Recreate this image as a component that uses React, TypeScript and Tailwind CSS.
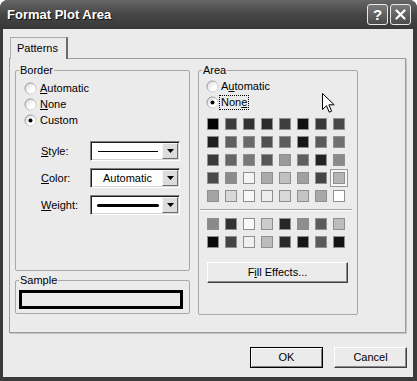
const font = "font-['Liberation_Sans',Arial,sans-serif]";

const paletteTop = [
  ["#050505", "#3c3c3c", "#323232", "#2a2a2a", "#3e3e3e", "#101010", "#383838", "#484848"],
  ["#1e1e1e", "#606060", "#6a6a6a", "#505050", "#5c5c5c", "#161616", "#5a5a5a", "#707070"],
  ["#3a3a3a", "#666666", "#787878", "#565656", "#9a9a9a", "#606060", "#222222", "#8a8a8a"],
  ["#4a4a4a", "#8a8a8a", "#f4f4f4", "#aaaaaa", "#c0c0c0", "#a0a0a0", "#444444", "#b4b4b4"],
  ["#a4a4a4", "#d8d8d8", "#f8f8f8", "#eeeeee", "#d8d8d8", "#c4c4c4", "#a8a8a8", "#ffffff"],
];

const paletteBottom = [
  ["#8a8a8a", "#333333", "#fafafa", "#cccccc", "#262626", "#8e8e8e", "#5a5a5a", "#bcbcbc"],
  ["#0a0a0a", "#444444", "#f0f0f0", "#bcbcbc", "#2a2a2a", "#161616", "#5a5a5a", "#141414"],
];

function Radio({ checked }: { checked?: boolean }) {
  return (
    <svg width="13" height="13" viewBox="0 0 13 13" className="shrink-0">
      <defs>
        <linearGradient id="radioFill" x1="0" y1="0" x2="1" y2="1">
          <stop offset="0" stopColor="#d2d2d2" />
          <stop offset="0.6" stopColor="#ffffff" />
        </linearGradient>
        <linearGradient id="radioEdge" x1="0" y1="0" x2="1" y2="1">
          <stop offset="0" stopColor="#7e7e7e" />
          <stop offset="1" stopColor="#e4e4e4" />
        </linearGradient>
      </defs>
      <circle cx="6.5" cy="6.5" r="5.5" fill="url(#radioFill)" stroke="url(#radioEdge)" />
      {checked && <circle cx="6.5" cy="6.5" r="2" fill="#000" />}
    </svg>
  );
}

function Dropdown({ children }: { children: React.ReactNode }) {
  return (
    <div className="w-[90px] h-[20px] flex bg-white border border-t-[#808080] border-l-[#808080] border-r-white border-b-white shadow-[inset_1px_1px_0_#202020,inset_-1px_-1px_0_#d4d4d4]">
      <div className="flex-1 flex items-center justify-center pl-[2px]">{children}</div>
      <div className="w-[16px] my-[1px] mr-[1px] flex items-center justify-center bg-[#dcdcdc] border border-t-[#f4f4f4] border-l-[#f4f4f4] border-r-[#6e6e6e] border-b-[#6e6e6e]">
        <svg width="7" height="4" viewBox="0 0 7 4">
          <path d="M0 0H7L3.5 4Z" fill="#000" />
        </svg>
      </div>
    </div>
  );
}

function Swatches({ rows, selected }: { rows: string[][]; selected?: [number, number] }) {
  return (
    <div className="grid grid-cols-[repeat(8,12px)] gap-[6px]">
      {rows.map((row, r) =>
        row.map((c, i) => {
          const sel = selected && selected[0] === r && selected[1] === i;
          return (
            <div
              key={`${r}-${i}`}
              className={
                "w-[12px] h-[12px] border border-[#8f8f8f] " +
                (sel ? "shadow-[0_0_0_2px_#f6f6f6,0_0_0_3px_#9a9a9a]" : "")
              }
              style={{ backgroundColor: c }}
            />
          );
        })
      )}
    </div>
  );
}

export default function App() {
  return (
    <div className={`relative w-[417px] h-[381px] bg-white text-[11px] leading-[13px] text-black ${font}`}>
      <div className="h-full flex flex-col rounded-t-[8px] overflow-hidden bg-[#3b3b3b]">
        {/* title bar */}
        <div className="h-[29px] shrink-0 flex items-center pl-[7px] pr-[6px] bg-gradient-to-b from-[#666] via-[#464646] to-[#383838]">
          <span className="font-bold text-[13px] text-white [text-shadow:1px_1px_0_#111]">Format Plot Area</span>
          <div className="ml-auto flex gap-[2px]">
            <div className="w-[21px] h-[21px] rounded-[3px] border border-[#e8e8e8] bg-gradient-to-b from-[#7a7a7a] to-[#4c4c4c] flex items-center justify-center">
              <span className="font-bold text-[15px] leading-none text-white">?</span>
            </div>
            <div className="w-[21px] h-[21px] rounded-[3px] border border-[#e8e8e8] bg-gradient-to-b from-[#7a7a7a] to-[#4c4c4c] flex items-center justify-center">
              <svg width="11" height="11" viewBox="0 0 11 11">
                <path d="M1.5 1.5L9.5 9.5M9.5 1.5L1.5 9.5" stroke="#fff" strokeWidth="2.2" strokeLinecap="round" />
              </svg>
            </div>
          </div>
        </div>

        {/* dialog body */}
        <div className="flex-1 ml-[3px] mr-[4px] mb-[4px] bg-[#ebebeb] flex flex-col pt-[8px] pl-[6px] pr-[6px]">
          {/* tab */}
          <div className="relative z-10 ml-[1px] -mb-[1px] w-[58px] h-[22px] bg-[#ebebeb] border-t border-l border-t-[#a8a8a8] border-l-[#b0b0b0] border-r-2 border-r-[#6a6a6a] flex items-center pl-[6px] pb-[1px]">
            Patterns
          </div>

          {/* tab panel */}
          <div className="w-[397px] h-[275px] border border-[#9c9c9c] shadow-[1px_1px_0_#c4c4c4] flex gap-[8px] pt-[5px] pl-[5px]">
            <div className="w-[175px] flex flex-col gap-[3px]">
              <fieldset className="h-[207px] border border-[#a8a8a8] rounded-[2px]">
                <legend className="ml-[3px] px-[1px]">Border</legend>
                <div className="pt-[3px] pl-[8px]">
                  <div className="h-[16px] flex items-center gap-[3px]">
                    <Radio />
                    <span>
                      <span className="underline">A</span>utomatic
                    </span>
                  </div>
                  <div className="h-[16px] flex items-center gap-[3px]">
                    <Radio />
                    <span>
                      <span className="underline">N</span>one
                    </span>
                  </div>
                  <div className="h-[16px] flex items-center gap-[3px]">
                    <Radio checked />
                    <span>Custom</span>
                  </div>
                  <div className="mt-[13px] pl-[17px] flex flex-col gap-[7px]">
                    <div className="h-[20px] flex items-center">
                      <span className="w-[49px]">
                        <span className="underline">S</span>tyle:
                      </span>
                      <Dropdown>
                        <div className="w-[60px] h-[1px] bg-black" />
                      </Dropdown>
                    </div>
                    <div className="h-[20px] flex items-center">
                      <span className="w-[49px]">
                        <span className="underline">C</span>olor:
                      </span>
                      <Dropdown>
                        <span>Automatic</span>
                      </Dropdown>
                    </div>
                    <div className="h-[20px] flex items-center">
                      <span className="w-[49px]">
                        <span className="underline">W</span>eight:
                      </span>
                      <Dropdown>
                        <div className="w-[62px] h-[3px] rounded-full bg-black" />
                      </Dropdown>
                    </div>
                  </div>
                </div>
              </fieldset>

              <fieldset className="h-[40px] border border-[#a8a8a8] rounded-[2px]">
                <legend className="ml-[3px] px-[1px]">Sample</legend>
                <div className="mt-[3px] ml-[3px] w-[164px] h-[19px] border-[3px] border-black" />
              </fieldset>
            </div>

            <fieldset className="w-[160px] h-[251px] border border-[#a8a8a8] rounded-[2px]">
              <legend className="ml-[3px] px-[1px]">Area</legend>
              <div className="pt-[1px]">
                <div className="pl-[7px]">
                  <div className="h-[16px] flex items-center">
                    <Radio />
                    <span className="border border-transparent px-[1px] leading-[13px]">
                      A<span className="underline">u</span>tomatic
                    </span>
                  </div>
                  <div className="h-[16px] flex items-center">
                    <Radio checked />
                    <span className="border border-dotted border-black px-[1px] leading-[13px]">
                      Non<span className="underline">e</span>
                    </span>
                  </div>
                </div>
                <div className="mt-[8px] pl-[8px]">
                  <Swatches rows={paletteTop} selected={[3, 7]} />
                </div>
                <div className="mt-[7px] ml-[1px] mr-[5px] h-[2px] border-t border-t-[#a4a4a4] border-b border-b-white" />
                <div className="mt-[7px] pl-[8px]">
                  <Swatches rows={paletteBottom} />
                </div>
                <div className="mt-[14px] ml-[8px] w-[141px] h-[21px] flex items-center justify-center bg-[#ebebeb] border border-t-white border-l-white border-r-[#404040] border-b-[#404040] shadow-[inset_-1px_-1px_0_#8a8a8a]">
                  <span>
                    F<span className="underline">i</span>ll Effects...
                  </span>
                </div>
              </div>
            </fieldset>
          </div>

          {/* buttons */}
          <div className="mt-[14px] flex justify-end gap-[11px]">
            <div className="w-[73px] h-[21px] flex items-center justify-center border border-black shadow-[inset_1px_1px_0_#fff,inset_-1px_-1px_0_#808080]">
              OK
            </div>
            <div className="w-[73px] h-[21px] flex items-center justify-center border border-t-white border-l-white border-r-[#404040] border-b-[#404040] shadow-[inset_-1px_-1px_0_#8a8a8a]">
              Cancel
            </div>
          </div>
        </div>
      </div>

      {/* mouse pointer */}
      <svg className="absolute left-[322px] top-[93px]" width="13" height="21" viewBox="0 0 13 21">
        <path
          d="M0.5 0.5V16.5L4.5 12.7L7.2 19.2L9.6 18.2L6.9 11.8H12.2Z"
          fill="#fff"
          stroke="#000"
          strokeLinejoin="round"
        />
      </svg>
    </div>
  );
}
